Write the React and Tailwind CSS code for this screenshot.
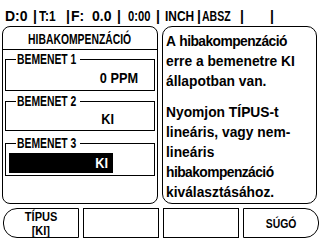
import React from "react";

// the display font is tall and narrow; squeeze Liberation Sans to match
const N = ({ children, className = "origin-left", s = "scale-x-[0.74]" }) => (
  <span className={`inline-block whitespace-nowrap ${s} ${className}`}>{children}</span>
);

const statusCells = [
  ["D:0", "w-[28px]", "scale-x-[1]"],
  ["|", "w-[6px]", "scale-x-[1]"],
  ["T:1", "w-[27px]", "scale-x-[0.85]"],
  ["|", "w-[5px]", "scale-x-[1]"],
  ["F:", "w-[21px]", "scale-x-[1]"],
  ["0.0", "w-[25px]", "scale-x-[1]"],
  ["|", "w-[11px]", "scale-x-[1]"],
  ["0:00", "w-[28px]", "scale-x-[0.8]"],
  ["|", "w-[9px]", "scale-x-[1]"],
  ["INCH", "w-[32px]", "scale-x-[0.85]"],
  ["|", "w-[5px]", "scale-x-[1]"],
  ["ABSZ", "w-[38px]", "scale-x-[0.75]"],
  ["|", "w-[30px]", "scale-x-[1]"],
  ["|", "w-[10px]", "scale-x-[1]"],
];

function Field({ label, className, children }) {
  return (
    <fieldset className={`mx-[2px] border border-black ${className}`}>
      <legend className="ml-[10px] w-[64px] pl-[1px] text-[14px] leading-[13px]">
        <N>{label}</N>
      </legend>
      {children}
    </fieldset>
  );
}

function SoftKey({ children, className }) {
  return (
    <div className={`w-[76px] h-[30px] border border-black flex flex-col items-center justify-center gap-[1px] text-[13px] leading-[13px] ${className}`}>
      {children}
    </div>
  );
}

export default function App() {
  return (
    <div className="w-[320px] h-[240px] bg-white text-black overflow-hidden font-bold font-['Liberation_Sans',sans-serif]">
      {/* status bar */}
      <div className="h-[26px] flex items-center pl-[5px] pt-[5px] text-[14px] leading-[14px]">
        {statusCells.map(([t, w, s], i) => (
          <span key={i} className={`${w} shrink-0`}>
            <N s={s}>{t}</N>
          </span>
        ))}
      </div>

      {/* panels */}
      <div className="flex gap-[4px] pl-[2px] h-[178px]">
        <div className="w-[156px] border border-black rounded-[8px] flex flex-col">
          <div className="h-[23px] border-b border-black flex items-center justify-center text-[14px] pt-[2px]">
            <N className="origin-center">HIBAKOMPENZÁCIÓ</N>
          </div>
          <Field label="BEMENET 1" className="mt-[3px] h-[38px]">
            <div className="w-[132px] h-[24px] flex items-center justify-end text-[15px]">
              <N className="origin-right" s="scale-x-[0.85]">0 PPM</N>
            </div>
          </Field>
          <Field label="BEMENET 2" className="mt-[4px] h-[36px]">
            <div className="w-[108px] h-[22px] flex items-center justify-end text-[15px]">
              <N className="origin-right" s="scale-x-[0.85]">KI</N>
            </div>
          </Field>
          <Field label="BEMENET 3" className="mt-[6px] h-[39px]">
            <div className="ml-[3px] mt-[3px] w-[104px] h-[20px] bg-black text-white flex items-center justify-end pr-[5px] text-[15px]">
              <N className="origin-right" s="scale-x-[0.85]">KI</N>
            </div>
          </Field>
        </div>

        <div className="w-[155px] border border-black rounded-[10px] pl-[3px] pt-[4px] text-[15px] leading-[20px] overflow-hidden">
          <div className="origin-left scale-x-[0.92] whitespace-nowrap">
            <div>
              A <span className="tracking-[-0.6px]">hibakompenzáció</span>
            </div>
            <div>erre a bemenetre KI</div>
            <div>állapotban van.</div>
            <div className="mt-[11px]">Nyomjon TÍPUS-t</div>
            <div>lineáris, vagy nem-</div>
            <div>lineáris</div>
            <div className="tracking-[-0.6px]">hibakompenzáció</div>
            <div>kiválasztásához.</div>
          </div>
        </div>
      </div>

      {/* soft keys */}
      <div className="flex gap-[4px] pl-[3px] mt-[4px]">
        <SoftKey className="rounded-l-[14px]">
          <N className="origin-center" s="scale-x-[0.85]">TÍPUS</N>
          <N className="origin-center" s="scale-x-[0.85]">[KI]</N>
        </SoftKey>
        <SoftKey />
        <SoftKey />
        <SoftKey className="rounded-r-[14px]">
          <N className="origin-center" s="scale-x-[0.8]">SÚGÓ</N>
        </SoftKey>
      </div>
    </div>
  );
}
